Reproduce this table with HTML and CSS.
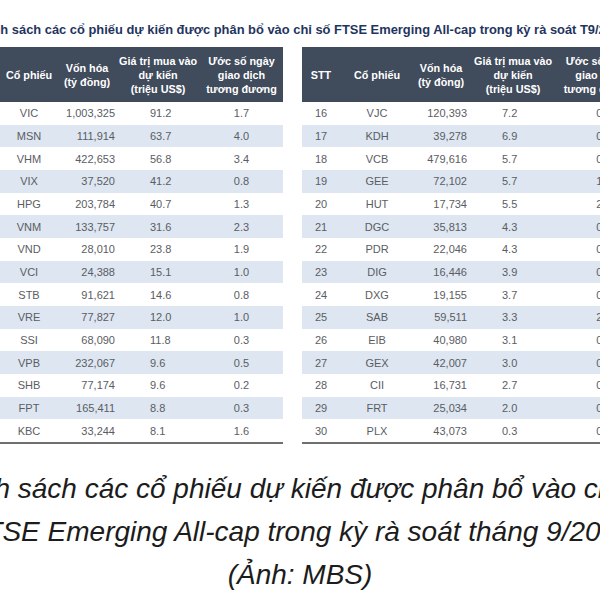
FILE: index.html
```html
<!DOCTYPE html>
<html lang="vi">
<head>
<meta charset="utf-8">
<title>FTSE Emerging All-cap</title>
<link rel="stylesheet" href="styles.css">
</head>
<body>
<div class="viewport">
  <div class="canvas">
    <h1 class="title">Danh sách các cổ phiếu dự kiến được phân bổ vào chỉ số FTSE Emerging All-cap trong kỳ rà soát T9/2025</h1>
    <div class="tables">
      <table class="grid grid-left">
        <colgroup>
          <col class="c-stt"><col class="c-code"><col class="c-cap"><col class="c-val"><col class="c-days">
        </colgroup>
        <thead>
          <tr><th>STT</th><th>Cổ phiếu</th><th>Vốn hóa<br>(tỷ đồng)</th><th>Giá trị mua vào<br>dự kiến<br>(triệu US$)</th><th>Ước số ngày<br>giao dịch<br>tương đương</th></tr>
        </thead>
        <tbody>
          <tr><td>1</td><td>VIC</td><td class="num">1,003,325</td><td class="val">91.2</td><td>1.7</td></tr>
          <tr><td>2</td><td>MSN</td><td class="num">111,914</td><td class="val">63.7</td><td>4.0</td></tr>
          <tr><td>3</td><td>VHM</td><td class="num">422,653</td><td class="val">56.8</td><td>3.4</td></tr>
          <tr><td>4</td><td>VIX</td><td class="num">37,520</td><td class="val">41.2</td><td>0.8</td></tr>
          <tr><td>5</td><td>HPG</td><td class="num">203,784</td><td class="val">40.7</td><td>1.3</td></tr>
          <tr><td>6</td><td>VNM</td><td class="num">133,757</td><td class="val">31.6</td><td>2.3</td></tr>
          <tr><td>7</td><td>VND</td><td class="num">28,010</td><td class="val">23.8</td><td>1.9</td></tr>
          <tr><td>8</td><td>VCI</td><td class="num">24,388</td><td class="val">15.1</td><td>1.0</td></tr>
          <tr><td>9</td><td>STB</td><td class="num">91,621</td><td class="val">14.6</td><td>0.8</td></tr>
          <tr><td>10</td><td>VRE</td><td class="num">77,827</td><td class="val">12.0</td><td>1.0</td></tr>
          <tr><td>11</td><td>SSI</td><td class="num">68,090</td><td class="val">11.8</td><td>0.3</td></tr>
          <tr><td>12</td><td>VPB</td><td class="num">232,067</td><td class="val">9.6</td><td>0.5</td></tr>
          <tr><td>13</td><td>SHB</td><td class="num">77,174</td><td class="val">9.6</td><td>0.2</td></tr>
          <tr><td>14</td><td>FPT</td><td class="num">165,411</td><td class="val">8.8</td><td>0.3</td></tr>
          <tr><td>15</td><td>KBC</td><td class="num">33,244</td><td class="val">8.1</td><td>1.6</td></tr>
        </tbody>
      </table>
      <table class="grid grid-right">
        <colgroup>
          <col class="c-stt"><col class="c-code"><col class="c-cap"><col class="c-val"><col class="c-days">
        </colgroup>
        <thead>
          <tr><th>STT</th><th>Cổ phiếu</th><th>Vốn hóa<br>(tỷ đồng)</th><th>Giá trị mua vào<br>dự kiến<br>(triệu US$)</th><th>Ước số ngày<br>giao dịch<br>tương đương</th></tr>
        </thead>
        <tbody>
          <tr><td>16</td><td>VJC</td><td class="num">120,393</td><td class="val">7.2</td><td class="days">0.4</td></tr>
          <tr><td>17</td><td>KDH</td><td class="num">39,278</td><td class="val">6.9</td><td class="days">0.9</td></tr>
          <tr><td>18</td><td>VCB</td><td class="num">479,616</td><td class="val">5.7</td><td class="days">0.7</td></tr>
          <tr><td>19</td><td>GEE</td><td class="num">72,102</td><td class="val">5.7</td><td class="days">1.5</td></tr>
          <tr><td>20</td><td>HUT</td><td class="num">17,734</td><td class="val">5.5</td><td class="days">2.1</td></tr>
          <tr><td>21</td><td>DGC</td><td class="num">35,813</td><td class="val">4.3</td><td class="days">0.6</td></tr>
          <tr><td>22</td><td>PDR</td><td class="num">22,046</td><td class="val">4.3</td><td class="days">0.5</td></tr>
          <tr><td>23</td><td>DIG</td><td class="num">16,446</td><td class="val">3.9</td><td class="days">0.3</td></tr>
          <tr><td>24</td><td>DXG</td><td class="num">19,155</td><td class="val">3.7</td><td class="days">0.4</td></tr>
          <tr><td>25</td><td>SAB</td><td class="num">59,511</td><td class="val">3.3</td><td class="days">2.6</td></tr>
          <tr><td>26</td><td>EIB</td><td class="num">40,980</td><td class="val">3.1</td><td class="days">0.8</td></tr>
          <tr><td>27</td><td>GEX</td><td class="num">42,007</td><td class="val">3.0</td><td class="days">0.2</td></tr>
          <tr><td>28</td><td>CII</td><td class="num">16,731</td><td class="val">2.7</td><td class="days">0.7</td></tr>
          <tr><td>29</td><td>FRT</td><td class="num">25,034</td><td class="val">2.0</td><td class="days">0.4</td></tr>
          <tr><td>30</td><td>PLX</td><td class="num">43,073</td><td class="val">0.3</td><td class="days">0.1</td></tr>
        </tbody>
      </table>
    </div>
    <p class="caption">Danh sách các cổ phiếu dự kiến được phân bổ vào chỉ số<br>FTSE Emerging All-cap trong kỳ rà soát tháng 9/2025<br>(Ảnh: MBS)</p>
  </div>
</div>
</body>
</html>
```
FILE: styles.css
```css
html, body {
  margin: 0;
  padding: 0;
  background: #ffffff;
  overflow: hidden;
}

.viewport {
  width: 600px;
  height: 600px;
  overflow: hidden;
}

.canvas {
  width: 800px;
  margin-left: -100px;
  font-family: "Liberation Sans", Arial, sans-serif;
}

.title {
  margin: 22px 0 9px;
  padding-left: 76px;
  font-size: 12.9px;
  line-height: 16px;
  font-weight: bold;
  color: #1f3560;
  text-align: left;
  white-space: nowrap;
}

.tables {
  display: flex;
  gap: 19px;
  padding-left: 45px;
}

.grid {
  width: 338px;
  border-collapse: collapse;
  table-layout: fixed;
  border-bottom: 2px solid #6f6f6f;
}

.grid-left .c-stt { width: 55px; }
.grid-left .c-code { width: 58px; }
.grid-left .c-cap { width: 58px; }
.grid-left .c-val { width: 84px; }
.grid-left .c-days { width: 83px; }

.grid-right .c-stt { width: 38px; }
.grid-right .c-code { width: 74px; }
.grid-right .c-cap { width: 54px; }
.grid-right .c-val { width: 90px; }
.grid-right .c-days { width: 82px; }

.grid th {
  height: 55px;
  padding: 0;
  background: #404b5c;
  color: #ffffff;
  font-size: 10.8px;
  line-height: 14px;
  font-weight: bold;
  text-align: center;
  vertical-align: middle;
  white-space: nowrap;
}

.grid td {
  height: 22.67px;
  padding: 0;
  font-size: 11px;
  color: #5a5d63;
  text-align: center;
  vertical-align: middle;
  white-space: nowrap;
}

.grid tbody tr:nth-child(even) td {
  background: #dde6f1;
}

.grid td.num {
  text-align: right;
  padding-right: 1px;
}

.grid td.val {
  text-align: left;
  padding-left: 34px;
}

.grid td.days {
  padding-left: 10px;
}

.caption {
  margin: 23px 0 0;
  font-size: 28px;
  line-height: 43px;
  font-style: italic;
  color: #1c1c1c;
  text-align: center;
  white-space: nowrap;
}
```
